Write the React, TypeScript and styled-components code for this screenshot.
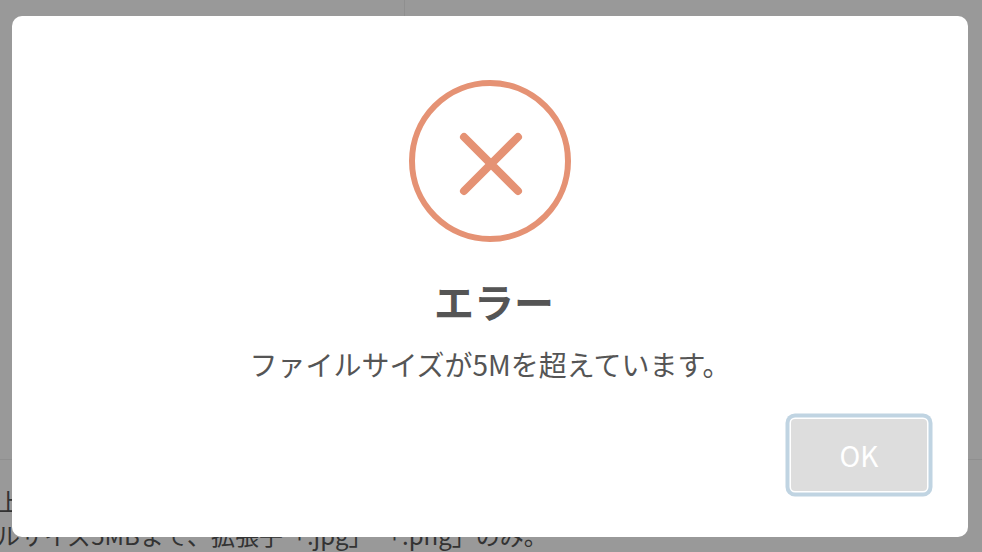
import styled, { createGlobalStyle } from 'styled-components'

const GlobalStyle = createGlobalStyle`
    html, body {
        margin: 0;
        padding: 0;
        background: #fff;
    }
    body {
        font-family: "Noto Sans CJK JP", "Noto Sans", sans-serif;
        color: #555;
        overflow: hidden;
    }
`

const App = () => {
    return(
        <>
        <GlobalStyle />
        <Page>
            <TopArea>
                <TopDivider />
            </TopArea>
            <Notes>
                <NoteHeading>以上</NoteHeading>
                <NoteLine>ファイルサイズ5MBまで、拡張子「.jpg」 「.png」のみ。</NoteLine>
            </Notes>
        </Page>
        <Overlay>
            <Modal>
                <ErrorIcon viewBox="0 0 162 162">
                    <circle cx="81" cy="81" r="78" fill="none" stroke="#e59274" strokeWidth="6" />
                    <path d="M55 57 L109 111 M109 57 L55 111" fill="none" stroke="#e59274" strokeWidth="8" strokeLinecap="round" />
                </ErrorIcon>
                <Title>エラー</Title>
                <Message>ファイルサイズが5Mを超えています。</Message>
                <Actions>
                    <OkButton>OK</OkButton>
                </Actions>
            </Modal>
        </Overlay>
        </>
    )
}

export default App

const Page = styled.div`
    width: 982px;
    height: 552px;
    overflow: hidden;
    display: flex;
    flex-direction: column;
`

const TopArea = styled.div`
    height: 459px;
    flex-shrink: 0;
    border-bottom: 1px solid #eee;
    display: flex;
    justify-content: center;
`

const TopDivider = styled.div`
    width: 1px;
    height: 100%;
    margin-right: 173px;
    background: #eee;
`

const Notes = styled.div`
    margin-left: -76px;
    padding-top: 24px;
    font-size: 24px;
    line-height: 34px;
    color: #555;
`

const NoteHeading = styled.div`
    margin-left: 49px;
`

const NoteLine = styled.div`
    white-space: nowrap;
`

const Overlay = styled.div`
    position: fixed;
    top: 0;
    left: 0;
    width: 982px;
    height: 552px;
    background: rgba(0, 0, 0, 0.4);
    padding: 16px 14px 15px 12px;
    box-sizing: border-box;
`

const Modal = styled.div`
    height: 100%;
    box-sizing: border-box;
    background: #fff;
    border-radius: 10px;
    padding: 64px 41px 0;
    display: flex;
    flex-direction: column;
    align-items: center;
`

const ErrorIcon = styled.svg`
    width: 162px;
    height: 162px;
    flex-shrink: 0;
`

const Title = styled.h2`
    margin: 31px 0 0 8px;
    font-size: 40px;
    line-height: 56px;
    font-weight: 700;
    color: #555;
`

const Message = styled.p`
    margin: 14px 0 0;
    font-size: 28px;
    line-height: 42px;
    color: #555;
`

const Actions = styled.div`
    align-self: flex-end;
    margin-top: 34px;
`

const OkButton = styled.button`
    display: block;
    width: 136px;
    height: 72px;
    border: none;
    border-radius: 4px;
    background: #dddddd;
    color: #fff;
    font-family: inherit;
    font-size: 28px;
    box-shadow: 0 0 0 1.5px #fff, 0 0 0 5.5px #c0d4e2;
`
